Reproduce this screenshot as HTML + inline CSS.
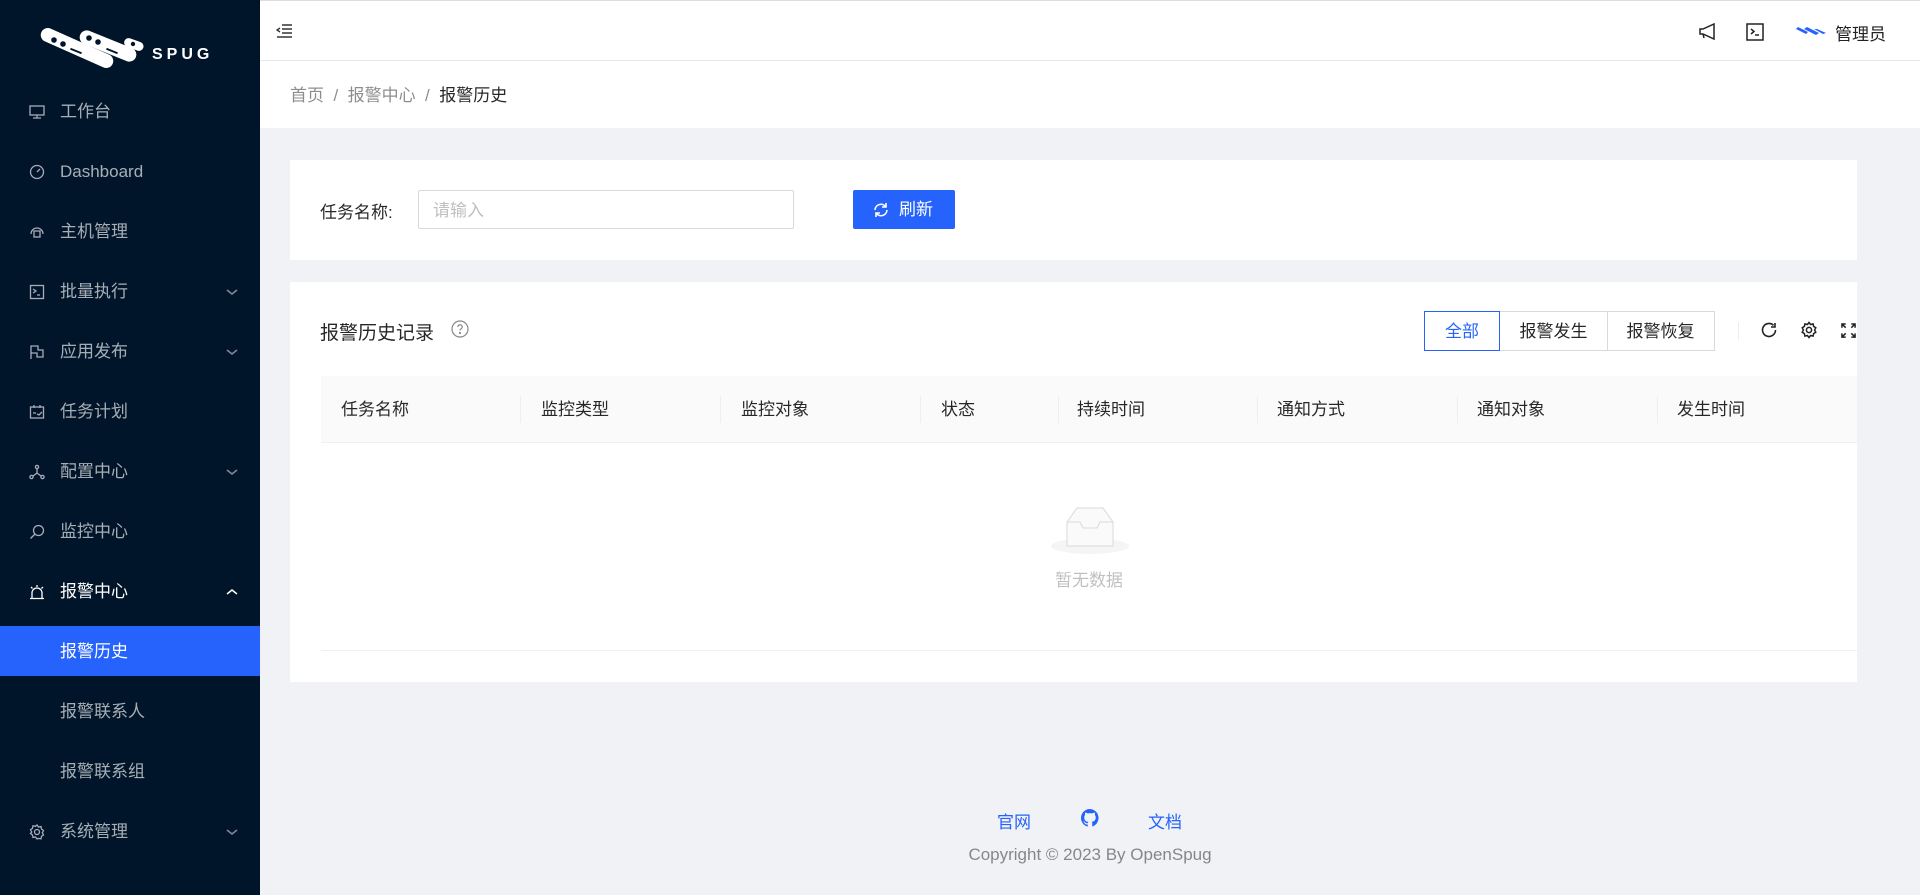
<!DOCTYPE html>
<html><head><meta charset="utf-8"><style>
*{box-sizing:border-box;margin:0;padding:0}
body{width:1920px;height:895px;overflow:hidden;background:#f0f2f5;font-family:"Liberation Sans","Noto Sans CJK SC",sans-serif;font-size:17px;color:rgba(0,0,0,.85);position:relative}
.side{position:absolute;left:0;top:0;width:260px;height:895px;background:#001529}
.mi{position:absolute;left:0;width:260px;height:50px;line-height:52px;color:rgba(255,255,255,.65);padding-left:60px;font-size:17px}
.mi svg.ic{position:absolute;left:29px;top:18px}
.mi.sel{background:#2563fc;color:#fff}
.arr{position:absolute;right:22px;top:21px}
.hdr{position:absolute;left:260px;top:0;right:0;height:60px;background:#fff;border-top:1px solid #ddd;box-shadow:0 1px 4px rgba(0,21,41,.08)}
.bc{position:absolute;left:260px;right:0;top:61px;height:67px;background:#fff;line-height:70px;padding-left:30px;color:rgba(0,0,0,.45)}
.card{position:absolute;left:290px;width:1567px;background:#fff}
.th{position:absolute;top:376px;left:321px;width:1536px;height:67px;background:#fafafa;border-bottom:1px solid #f0f0f0}
.th div{position:absolute;top:0;line-height:67px;font-size:17px}
.th i{position:absolute;top:20px;width:1px;height:27px;background:#eee}
a{color:#2563fc;text-decoration:none}
</style></head><body>
<div class="side">
<svg style="position:absolute;left:0;top:0" width="260" height="70" viewBox="0 0 260 70">
<g transform="translate(2 9)">
<g fill="#fff">
<rect x="36" y="32" width="78" height="14" rx="7" transform="rotate(24 75 39)"/>
<rect x="76" y="30" width="60" height="14" rx="7" transform="rotate(22 106 37)"/>
<rect x="122" y="31" width="20" height="9" rx="4.5" transform="rotate(20 132 35)"/>
</g>
<g fill="#001529"><circle cx="52" cy="31" r="2.8"/><circle cx="61" cy="35" r="2.8"/><circle cx="87" cy="29" r="2.8"/><circle cx="96" cy="33" r="2.8"/><circle cx="131" cy="35" r="2.2"/>
<rect x="68" y="41" width="12" height="2" transform="rotate(22 74 42)"/><rect x="104" y="41" width="12" height="2" transform="rotate(22 110 42)"/></g>
</g>
<text x="152" y="59" fill="#fff" font-family="Liberation Sans" font-size="16" font-weight="bold" letter-spacing="4">SPUG</text></svg>
<div class="mi" style="top:86px"><svg class="ic" width="16" height="16" viewBox="0 0 16 16" fill="none" stroke="#aab" stroke-width="1.3"><rect x="1" y="2" width="14" height="9"/><path d="M8 11v3M4 14h8"/></svg>工作台</div>
<div class="mi" style="top:146px"><svg class="ic" width="16" height="16" viewBox="0 0 16 16" fill="none" stroke="#aab" stroke-width="1.3"><circle cx="8" cy="8" r="6.5"/><path d="M8 8l3-3"/></svg>Dashboard</div>
<div class="mi" style="top:206px"><svg class="ic" width="16" height="16" viewBox="0 0 16 16" fill="none" stroke="#aab" stroke-width="1.3"><path d="M2 10a6 6 0 0112 0"/><rect x="5" y="7" width="6" height="6"/></svg>主机管理</div>
<div class="mi" style="top:266px"><svg class="ic" width="16" height="16" viewBox="0 0 16 16" fill="none" stroke="#aab" stroke-width="1.3"><rect x="1.5" y="1.5" width="13" height="13"/><path d="M4 5l3 2-3 2M8 11h3"/></svg>批量执行<svg class="arr" width="12" height="10"><path d="M1 3l5 4 5-4" fill="none" stroke="#889" stroke-width="1.5"/></svg></div>
<div class="mi" style="top:326px"><svg class="ic" width="16" height="16" viewBox="0 0 16 16" fill="none" stroke="#aab" stroke-width="1.3"><path d="M2 15V2h7v4h5v7H8V9H2"/></svg>应用发布<svg class="arr" width="12" height="10"><path d="M1 3l5 4 5-4" fill="none" stroke="#889" stroke-width="1.5"/></svg></div>
<div class="mi" style="top:386px"><svg class="ic" width="16" height="16" viewBox="0 0 16 16" fill="none" stroke="#aab" stroke-width="1.3"><rect x="1.5" y="3" width="13" height="11"/><path d="M5 1v3M11 1v3M4 9h3M8 10l2 1 3-3"/></svg>任务计划</div>
<div class="mi" style="top:446px"><svg class="ic" width="16" height="16" viewBox="0 0 16 16" fill="none" stroke="#aab" stroke-width="1.3"><circle cx="8" cy="3" r="1.6"/><circle cx="2.5" cy="13" r="1.6"/><circle cx="13.5" cy="13" r="1.6"/><path d="M8 5v4L4 12M8 9l4 3"/></svg>配置中心<svg class="arr" width="12" height="10"><path d="M1 3l5 4 5-4" fill="none" stroke="#889" stroke-width="1.5"/></svg></div>
<div class="mi" style="top:506px"><svg class="ic" width="16" height="16" viewBox="0 0 16 16" fill="none" stroke="#aab" stroke-width="1.3"><circle cx="9.5" cy="6.5" r="5"/><path d="M6 10l-4.5 4.5"/></svg>监控中心</div>
<div class="mi" style="top:566px;color:#fff"><svg class="ic" width="16" height="16" viewBox="0 0 16 16" fill="none" stroke="#fff" stroke-width="1.3"><path d="M3 14V9a5 5 0 0110 0v5M1 14.5h14M8 1v2M2 3l1.5 1.5M14 3l-1.5 1.5"/></svg>报警中心<svg class="arr" width="12" height="10"><path d="M1 7l5-4 5 4" fill="none" stroke="#fff" stroke-width="1.5"/></svg></div>
<div class="mi sel" style="top:626px">报警历史</div>
<div class="mi" style="top:686px">报警联系人</div>
<div class="mi" style="top:746px">报警联系组</div>
<div class="mi" style="top:806px"><svg class="ic" width="16" height="16" viewBox="0 0 16 16" fill="none" stroke="#aab" stroke-width="1.3"><circle cx="8" cy="8" r="2.5"/><path d="M8 1l1.5 2 2.5-.5.5 2.5 2 1.5-1.2 2.2 1.2 2.2-2 1.5-.5 2.5-2.5-.5L8 15l-1.5-2-2.5.5-.5-2.5-2-1.5L2.7 8 1.5 5.8l2-1.5.5-2.5 2.5.5z"/></svg>系统管理<svg class="arr" width="12" height="10"><path d="M1 3l5 4 5-4" fill="none" stroke="#889" stroke-width="1.5"/></svg></div>
</div>
<div class="hdr">
<svg style="position:absolute;left:16px;top:23px" width="16" height="14" viewBox="0 0 16 14" fill="none" stroke="#333" stroke-width="1.4"><path d="M6 1h10M6 5h10M6 9h10M1 13h15M4 4L1 6l3 2"/></svg>
<svg style="position:absolute;left:1438px;top:22px" width="20" height="17" viewBox="0 0 20 17" fill="none" stroke="#222" stroke-width="1.5"><path d="M2 6h3l11-5v15L5 11H2z M5 11l1 4"/></svg>
<svg style="position:absolute;left:1486px;top:22px" width="18" height="18" viewBox="0 0 18 18" fill="none" stroke="#222" stroke-width="1.5"><rect x="1" y="1" width="16" height="16"/><path d="M5 6l3 2.5L5 11M9 12h4"/></svg>
<svg style="position:absolute;left:1536px;top:24px" width="30" height="14" viewBox="0 0 30 14"><path d="M0 4l10 5 2-2L2 2z M8 4l12 6 3-2L11 2z M18 4l9 5 3-1-9-4z" fill="#2563fc"/></svg>
<span style="position:absolute;left:1575px;top:19px;font-size:17px;color:#222">管理员</span>
</div>
<div class="bc">首页 &nbsp;/&nbsp; 报警中心 &nbsp;/&nbsp; <span style="color:rgba(0,0,0,.85)">报警历史</span></div>
<div class="card" style="top:160px;height:100px">
<span style="position:absolute;left:30px;top:38px">任务名称:</span>
<div style="position:absolute;left:128px;top:30px;width:376px;height:39px;border:1px solid #d9d9d9;border-radius:2px;line-height:39px;padding-left:14px;color:#bfbfbf">请输入</div>
<div style="position:absolute;left:563px;top:30px;width:102px;height:39px;background:#2563fc;border-radius:2px;color:#fff;line-height:40px;padding-left:46px">刷新<svg style="position:absolute;left:20px;top:12px" width="16" height="16" viewBox="0 0 16 16" fill="none" stroke="#fff" stroke-width="1.6"><path d="M14 8a6 6 0 01-11 3M2 8a6 6 0 0111-3M13 1v4H9M3 15v-4h4"/></svg></div>
</div>
<div class="card" style="top:282px;height:400px">
<span style="position:absolute;left:30px;top:36px;font-size:19px">报警历史记录</span>
<svg style="position:absolute;left:161px;top:38px" width="18" height="18" viewBox="0 0 18 18" fill="none" stroke="#888" stroke-width="1.2"><circle cx="9" cy="9" r="8"/><path d="M6.8 7a2.2 2.2 0 114 1.2c-.8.6-1.8 1-1.8 2.3"/><circle cx="9" cy="13" r=".5"/></svg>
<div style="position:absolute;left:1134px;top:29px;width:76px;height:40px;border:1px solid #2563fc;color:#2563fc;line-height:40px;text-align:center">全部</div>
<div style="position:absolute;left:1210px;top:29px;width:108px;height:40px;border:1px solid #d9d9d9;border-left:0;line-height:40px;text-align:center">报警发生</div>
<div style="position:absolute;left:1317px;top:29px;width:108px;height:40px;border:1px solid #d9d9d9;border-left:0;line-height:40px;text-align:center">报警恢复</div>
<div style="position:absolute;left:1448px;top:40px;width:1px;height:18px;background:#eee"></div>
<svg style="position:absolute;left:1470px;top:39px" width="18" height="18" viewBox="0 0 18 18" fill="none" stroke="#222" stroke-width="1.6"><path d="M15.5 9a6.5 6.5 0 11-2-4.7M15 2v4h-4"/></svg>
<svg style="position:absolute;left:1510px;top:39px" width="18" height="18" viewBox="0 0 18 18" fill="none" stroke="#222" stroke-width="1.5"><circle cx="9" cy="9" r="2.6"/><path d="M9 1.5l1.6 2 2.5-.6.5 2.5 2.2 1.4L14.6 9l1.2 2.2-2.2 1.4-.5 2.5-2.5-.6L9 16.5l-1.6-2-2.5.6-.5-2.5-2.2-1.4L3.4 9 2.2 6.8l2.2-1.4.5-2.5 2.5.6z"/></svg>
<svg style="position:absolute;left:1551px;top:41px" width="15" height="15" viewBox="0 0 16 16" fill="none" stroke="#222" stroke-width="1.6"><path d="M1 5V1h4M1 1l4 4M15 5V1h-4M15 1l-4 4M1 11v4h4M1 15l4-4M15 11v4h-4M15 15l-4-4"/></svg>
<div style="position:absolute;left:31px;top:368px;width:1536px;height:1px;background:#f0f0f0"></div>
<svg style="position:absolute;left:760px;top:218px" width="80" height="60" viewBox="0 0 80 60"><ellipse cx="40" cy="46" rx="39" ry="8" fill="#f5f5f5"/><path d="M17 22L27 8h26l10 14v24H17z" fill="#fafafa" stroke="#d9d9d9"/><path d="M17 22h13l3 6h14l3-6h13" fill="none" stroke="#d9d9d9"/></svg>
<span style="position:absolute;left:765px;top:284px;color:rgba(0,0,0,.25)">暂无数据</span>
</div>
<div class="th">
<div style="left:20px">任务名称</div><i style="left:199px"></i>
<div style="left:220px">监控类型</div><i style="left:399px"></i>
<div style="left:420px">监控对象</div><i style="left:599px"></i>
<div style="left:620px">状态</div><i style="left:737px"></i>
<div style="left:756px">持续时间</div><i style="left:936px"></i>
<div style="left:956px">通知方式</div><i style="left:1136px"></i>
<div style="left:1156px">通知对象</div><i style="left:1336px"></i>
<div style="left:1356px">发生时间</div>
</div>
<a style="position:absolute;left:997px;top:808px">官网</a>
<svg style="position:absolute;left:1081px;top:809px" width="18" height="18" viewBox="0 0 16 16"><path fill="#2563fc" d="M8 0a8 8 0 00-2.5 15.6c.4 0 .5-.2.5-.4v-1.5c-2.2.5-2.7-1-2.7-1-.4-.9-.9-1.2-.9-1.2-.7-.5.1-.5.1-.5.8.1 1.2.8 1.2.8.7 1.3 1.9.9 2.3.7.1-.5.3-.9.5-1.1-1.8-.2-3.6-.9-3.6-4 0-.9.3-1.6.8-2.1-.1-.2-.4-1 .1-2.1 0 0 .7-.2 2.2.8a7.4 7.4 0 014 0c1.5-1 2.2-.8 2.2-.8.4 1.1.2 1.9.1 2.1.5.6.8 1.3.8 2.1 0 3.1-1.9 3.7-3.6 3.9.3.3.5.8.5 1.5v2.2c0 .2.1.5.6.4A8 8 0 008 0z"/></svg>
<a style="position:absolute;left:1148px;top:808px">文档</a>
<div style="position:absolute;left:260px;right:0;top:845px;text-align:center;color:rgba(0,0,0,.45)">Copyright © 2023 By OpenSpug</div>
</body></html>
